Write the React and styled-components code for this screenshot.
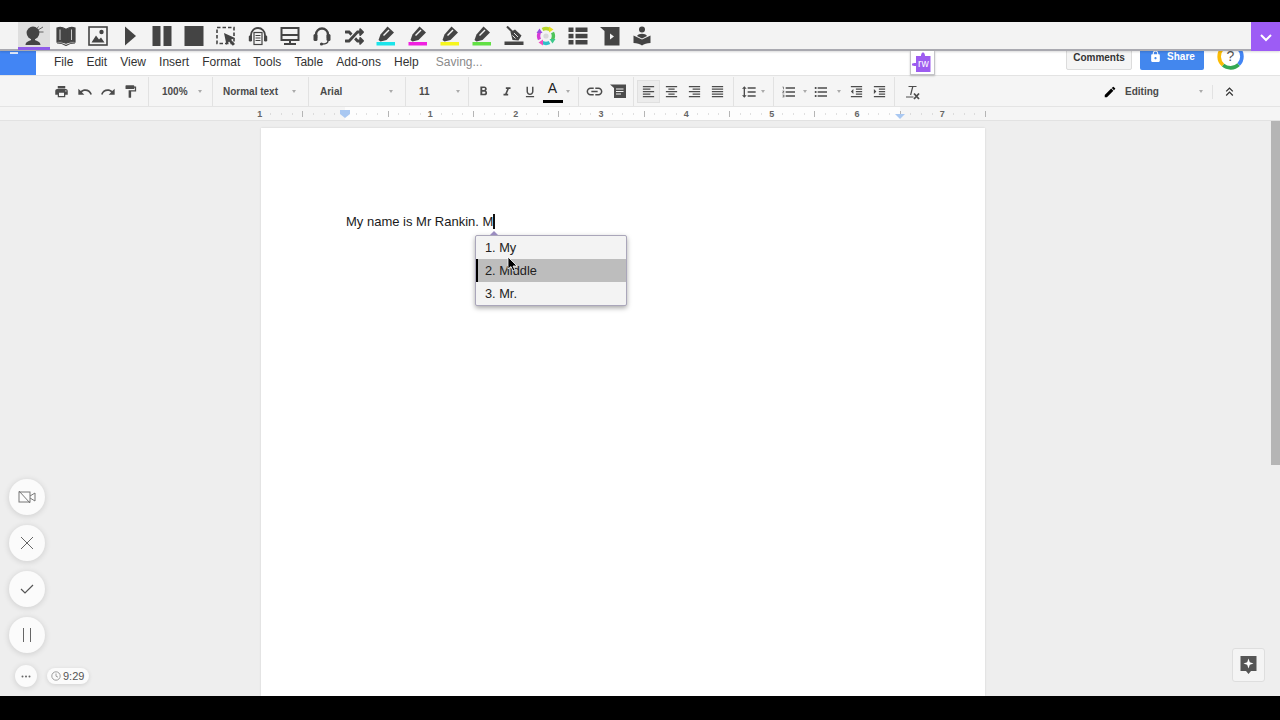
import React from 'react';
import styled, { createGlobalStyle } from 'styled-components';
import { FaRandom } from 'react-icons/fa';
import {
  MdPrint,
  MdUndo,
  MdRedo,
  MdFormatPaint,
  MdFormatBold,
  MdFormatItalic,
  MdFormatUnderlined,
  MdLink,
  MdFormatAlignLeft,
  MdFormatAlignCenter,
  MdFormatAlignRight,
  MdFormatAlignJustify,
  MdFormatLineSpacing,
  MdFormatListNumbered,
  MdFormatListBulleted,
  MdFormatIndentDecrease,
  MdFormatIndentIncrease,
  MdEdit,
  MdLock,
  MdKeyboardDoubleArrowUp,
} from 'react-icons/md';

const GlobalStyle = createGlobalStyle`
  html, body {
    margin: 0;
    padding: 0;
    background: #000;
  }
  body {
    font-family: "Liberation Sans", Arial, sans-serif;
  }
`;

const Frame = styled.div`
  width: 1280px;
  height: 720px;
  display: flex;
  flex-direction: column;
  overflow: hidden;
  background: #000;
`;

const BlackBar = styled.div`
  flex: none;
  height: ${(p) => p.$height}px;
  background: #000;
`;

const Main = styled.main`
  position: relative;
  flex: 1;
  min-height: 0;
  display: flex;
  flex-direction: column;
  background: #eee;
`;

/* read&write bar, sits over the docs header */
const RwBar = styled.div`
  position: absolute;
  top: 0;
  left: 0;
  right: 0;
  z-index: 5;
  height: 27px;
  padding: 0 0 0 18px;
  display: flex;
  background: #f3f3f3;
  border-bottom: 2px solid #a9a9b0;
  box-shadow: 0 1px 2px rgba(0, 0, 0, 0.15);
`;

const RwItem = styled.div`
  width: 32px;
  height: 28px;
  flex: none;
  display: flex;
  align-items: center;
  justify-content: center;
  color: #444;
  background: ${(p) => (p.$active ? '#dedede' : 'transparent')};
  box-shadow: ${(p) => (p.$active ? 'inset 0 -3px 0 #8f5ce8' : 'none')};
`;

const RwCollapse = styled.div`
  margin-left: auto;
  width: 29px;
  height: 29px;
  display: flex;
  align-items: center;
  justify-content: center;
  background: #9d5cf5;
  color: #fff;
`;

const PuzzleTab = styled.div`
  position: absolute;
  top: 29px;
  left: 910px;
  width: 25px;
  height: 24px;
  box-sizing: border-box;
  background: #fff;
  border: 1px solid #c4c4c8;
  border-top: none;
  box-shadow: 0 1px 2px rgba(0, 0, 0, 0.2);
`;

const Header = styled.header`
  flex: none;
  height: 53px;
  display: flex;
  align-items: flex-end;
  background: #fff;
  border-bottom: 1px solid #e3e3e3;
`;

const Logo = styled.div`
  width: 36px;
  height: 100%;
  box-sizing: border-box;
  padding: 30px 0 0 10px;
  background: #4285f4;

  &::before {
    content: '';
    display: block;
    width: 8px;
    height: 2px;
    background: #dfe9fb;
  }
`;

const Menu = styled.nav`
  display: flex;
  gap: 13.1px;
  padding: 0 0 6px 18px;
  font-size: 12px;
  line-height: 14px;
  color: #333;
`;

const Saving = styled.span`
  margin-left: 4px;
  color: #8a8a8a;
`;

const HeaderRight = styled.div`
  margin-left: auto;
  padding: 0 36px 5px 0;
  display: flex;
  align-items: flex-end;
`;

const CommentsButton = styled.div`
  width: 66px;
  height: 27px;
  box-sizing: border-box;
  padding-top: 7px;
  text-align: center;
  font-size: 10px;
  font-weight: bold;
  line-height: 14px;
  color: #333;
  background: #f5f5f5;
  border: 1px solid #dcdcdc;
  border-radius: 2px;
`;

const ShareButton = styled.div`
  width: 64px;
  height: 27px;
  margin: 0 13px 0 8px;
  box-sizing: border-box;
  padding-top: 7px;
  display: flex;
  justify-content: center;
  gap: 5px;
  font-size: 10px;
  font-weight: bold;
  line-height: 14px;
  color: #fff;
  background: #4387ee;
  border-radius: 2px;
`;

const Toolbar = styled.div`
  flex: none;
  height: 29px;
  display: flex;
  padding: 1px 0 0 50px;
  background: #f5f5f5;
  border-bottom: 1px solid #e4e4e4;
  color: #555;
`;

const Group = styled.div`
  flex: none;
  width: ${(p) => (p.$width ? `${p.$width}px` : 'auto')};
  box-sizing: border-box;
  padding-left: ${(p) => p.$pad || 0}px;
  display: flex;
  align-items: center;
  border-right: 1px solid #e2e2e2;
`;

const LastGroup = styled(Group)`
  flex: 1;
  border-right: none;
`;

const IconBtn = styled.div`
  flex: none;
  width: 23px;
  height: 23px;
  display: flex;
  align-items: center;
  justify-content: center;
  box-sizing: border-box;
  background: ${(p) => (p.$active ? '#ececec' : 'transparent')};
  border: 1px solid ${(p) => (p.$active ? '#e0e0e0' : 'transparent')};
  color: #4c4c4c;
`;

const ColorA = styled.div`
  width: 20px;
  height: 23px;
  box-sizing: border-box;
  border-bottom: 3px solid #000;
  font-size: 14px;
  line-height: 17px;
  text-align: center;
  color: #222;
`;

const Select = styled.div`
  flex: 1;
  height: 100%;
  padding: 0 ${(p) => p.$right || 11}px 0 ${(p) => p.$left || 12}px;
  display: flex;
  align-items: center;
  justify-content: space-between;
  font-size: 10px;
  font-weight: bold;
  color: #4a4a4a;
`;

const Caret = styled.span`
  flex: none;
  display: block;
  width: 0;
  height: 0;
  margin: ${(p) => p.$margin || '0'};
  border-left: 2.5px solid transparent;
  border-right: 2.5px solid transparent;
  border-top: 3px solid #aaa;
`;

const ModeGroup = styled(Group)`
  width: 110px;
  margin-left: auto;
  padding: 0 9px 0 0;
  justify-content: space-between;
  font-size: 10px;
  font-weight: bold;
  color: #4a4a4a;
`;

const ModeLabel = styled.div`
  display: flex;
  align-items: center;
  gap: 8px;
  color: #000;

  span {
    color: #4a4a4a;
  }
`;

const CollapseCell = styled.div`
  flex: none;
  width: 32px;
  margin-right: 35px;
  display: flex;
  align-items: center;
  justify-content: center;
  color: #333;
`;

const RulerSvg = styled.svg`
  flex: none;
  display: block;
`;

const Canvas = styled.div`
  flex: 1;
  min-height: 0;
  display: flex;
  overflow: hidden;
  background: #eee;
`;

const Page = styled.div`
  position: relative;
  flex: none;
  width: 724px;
  margin: 7px 0 0 261px;
  box-sizing: border-box;
  padding: 85px 85px 0;
  background: #fff;
  box-shadow: 0 0 2px rgba(0, 0, 0, 0.12);
  font-size: 13px;
  line-height: 18px;
  color: #1a1a1a;
`;

const TextCaret = styled.span`
  display: inline-block;
  width: 2px;
  height: 15px;
  vertical-align: -3px;
  background: #111;
`;

const Popup = styled.div`
  position: absolute;
  top: 107px;
  left: 214px;
  width: 152px;
  box-sizing: border-box;
  background: #f3f3f3;
  border: 1px solid #aaa6ba;
  border-radius: 2px;
  box-shadow: 0 2px 5px rgba(0, 0, 0, 0.35);

  &::before {
    content: '';
    position: absolute;
    top: -5px;
    left: 14px;
    border-left: 4px solid transparent;
    border-right: 4px solid transparent;
    border-bottom: 4px solid #9a8cc0;
  }
`;

const PopupRow = styled.div`
  height: 23px;
  box-sizing: border-box;
  padding-left: ${(p) => (p.$selected ? 7 : 9)}px;
  display: flex;
  align-items: center;
  gap: 3.5px;
  font-size: 12.8px;
  color: #222;
  background: ${(p) => (p.$selected ? '#bdbdbd' : 'transparent')};
  border-left: ${(p) => (p.$selected ? '2px solid #000' : 'none')};
`;

const Pointer = styled.svg`
  position: absolute;
  top: 128px;
  left: 246px;
  z-index: 2;
`;

const ScrollColumn = styled.div`
  flex: none;
  width: 9px;
  margin-left: auto;
`;

const ScrollThumb = styled.div`
  height: 344px;
  background: #b5b5b5;
`;

const Floating = styled.div`
  position: absolute;
  left: 9px;
  bottom: 9px;
  z-index: 3;
  display: flex;
  flex-direction: column;
  align-items: flex-start;
  gap: 10px;
`;

const RoundButton = styled.div`
  width: 36px;
  height: 36px;
  border-radius: 50%;
  display: flex;
  align-items: center;
  justify-content: center;
  background: #fbfbfb;
  color: #666;
  box-shadow: 0 1px 6px rgba(0, 0, 0, 0.14);
`;

const TimerRow = styled.div`
  margin: 2px 0 0 6px;
  display: flex;
  align-items: center;
  gap: 10px;
`;

const SmallRound = styled(RoundButton)`
  width: 22px;
  height: 22px;
`;

const TimerPill = styled.div`
  width: 42px;
  height: 16px;
  box-sizing: border-box;
  padding-left: 4px;
  display: flex;
  align-items: center;
  gap: 2px;
  font-size: 11px;
  color: #555;
  background: #fbfbfb;
  border-radius: 8px;
  box-shadow: 0 1px 4px rgba(0, 0, 0, 0.12);
`;

const ExploreButton = styled.div`
  position: absolute;
  right: 15px;
  bottom: 14px;
  width: 33px;
  height: 34px;
  box-sizing: border-box;
  display: flex;
  align-items: center;
  justify-content: center;
  background: #f4f4f4;
  border: 1px solid #dedede;
  border-radius: 3px;
`;

const DARK = '#444';

function RwIcon({ children }) {
  return (
    <svg width="20" height="20" viewBox="0 0 20 20" fill={DARK}>
      {children}
    </svg>
  );
}

function Highlighter({ color }) {
  return (
    <RwIcon>
      <path d="M2.5 14 L4.5 8.5 L11.5 0.5 L18 6.5 L10.5 14 L4.5 15.5 Z" />
      <path d="M7.5 9.5 L13 4" stroke="#f3f3f3" strokeWidth="1.4" fill="none" />
      <rect x="0.5" y="16" width="18.5" height="3.5" fill={color} />
    </RwIcon>
  );
}

const rwIcons = [
  <RwIcon key="person">
    <circle cx="9" cy="7" r="6.4" />
    <path d="M1.5 19 C1.5 16 5 15 7 14 V11 H11 V14 C13 15 16.5 16 16.5 19 Z" />
    <path d="M14 4 L19 1 M15 6 L19.5 6 M13 2.5 L14.5 0.5" stroke={DARK} strokeWidth="0.8" />
  </RwIcon>,
  <RwIcon key="book">
    <path d="M1 2 C4 1 7 1.5 9.4 3 V17 C7 16 4 15.5 1 16 Z" stroke={DARK} strokeWidth="1.2" />
    <path d="M19 2 C16 1 13 1.5 10.6 3 V17 C13 16 16 15.5 19 16 Z" stroke={DARK} strokeWidth="1.2" />
    <path d="M4 3.5 V14 M15.5 3.5 V14" stroke="#ccc" strokeWidth="1" />
    <path d="M1 17 C4 17 7 17.5 10 19.5 C13 17.5 16 17 19 17" stroke={DARK} strokeWidth="1.2" fill="none" />
  </RwIcon>,
  <RwIcon key="picture">
    <rect x="1" y="1" width="18" height="18" fill="#f3f3f3" stroke={DARK} strokeWidth="1.6" />
    <circle cx="13.5" cy="6" r="2.2" />
    <path d="M3.5 16.5 L8 9.5 L11 13.5 L13 11.5 L16.5 16.5 Z" />
  </RwIcon>,
  <RwIcon key="play">
    <path d="M5 0.5 L16 10 L5 19.5 Z" />
  </RwIcon>,
  <RwIcon key="pause">
    <rect x="0.5" y="0" width="8" height="20" />
    <rect x="11.5" y="0" width="8" height="20" />
  </RwIcon>,
  <RwIcon key="stop">
    <rect x="0.5" y="0" width="19" height="20" />
  </RwIcon>,
  <RwIcon key="select">
    <rect x="1" y="1.5" width="17" height="16" fill="none" stroke={DARK} strokeWidth="1.6" strokeDasharray="3.5 2" />
    <path d="M8 7 L19 12 L15 13.8 L19 18 L16.8 19.8 L13 15.5 L10.5 19 Z" />
  </RwIcon>,
  <RwIcon key="speak">
    <path d="M3 11 V9 A7 7 0 0 1 17 9 V11" fill="none" stroke={DARK} strokeWidth="1.8" />
    <rect x="0.8" y="9.5" width="3.2" height="6" rx="1.2" />
    <rect x="16" y="9.5" width="3.2" height="6" rx="1.2" />
    <rect x="6" y="6.5" width="8" height="12" fill="#f3f3f3" stroke={DARK} strokeWidth="1.2" />
    <path d="M7.5 9.5 H12.5 M7.5 12 H12.5 M7.5 14.5 H12.5" stroke={DARK} strokeWidth="1" />
  </RwIcon>,
  <RwIcon key="monitor">
    <rect x="1.5" y="2" width="17" height="12" fill="none" stroke={DARK} strokeWidth="2" />
    <rect x="2" y="8" width="16" height="2" />
    <rect x="9" y="14" width="2" height="3" />
    <rect x="4" y="17" width="12" height="2" />
  </RwIcon>,
  <RwIcon key="headset">
    <path d="M4 12 V8.5 A6 6 0 0 1 16 8.5 V12" fill="none" stroke={DARK} strokeWidth="2.4" />
    <rect x="1.5" y="8" width="4" height="7" rx="1.5" />
    <rect x="14.5" y="8" width="4" height="7" rx="1.5" />
    <path d="M16 15 C16 17.5 13 18 10 18" fill="none" stroke={DARK} strokeWidth="1.4" />
    <circle cx="9.5" cy="18" r="1.6" />
  </RwIcon>,
  <FaRandom key="shuffle" size={19} />,
  <Highlighter key="cyan" color="#1be4ea" />,
  <Highlighter key="magenta" color="#f020e0" />,
  <Highlighter key="yellow" color="#f6f61e" />,
  <Highlighter key="green" color="#62e044" />,
  <RwIcon key="eraser">
    <path d="M3 0.5 L9 6.5" stroke={DARK} strokeWidth="2" />
    <path d="M6.5 6 L11 3.5 L17.5 9.5 L14.5 14.5 L8.5 14 Z" />
    <path d="M10 7 L14 11 M8.5 9.5 L11.5 12.5" stroke="#f3f3f3" strokeWidth="0.9" />
    <rect x="0.5" y="15.5" width="19" height="3.5" />
  </RwIcon>,
  <RwIcon key="wheel">
    <g fill="none" strokeWidth="3.4">
      <path d="M6.5 3.5 A7.4 7.4 0 0 1 13.5 3.5" stroke="#b7d82a" />
      <path d="M16.5 6.5 A7.4 7.4 0 0 1 16.5 13.5" stroke="#4ec45a" />
      <path d="M13.5 16.5 A7.4 7.4 0 0 1 6.5 16.5" stroke="#2fc0c8" />
      <path d="M3.5 13.5 A7.4 7.4 0 0 1 3.5 6.5" stroke="#d63ad6" />
    </g>
    <path d="M0.5 7 L6.5 7 L3.5 2.5 Z" fill="#9a4de0" />
    <path d="M13 0.5 L13 6.5 L17.5 3.5 Z" fill="#e8e020" />
    <path d="M19.5 13 L13.5 13 L16.5 17.5 Z" fill="#3cc88a" />
    <path d="M7 19.5 L7 13.5 L2.5 16.5 Z" fill="#f04fc0" />
    <circle cx="10" cy="10" r="2.6" fill="#d8d8d8" />
  </RwIcon>,
  <RwIcon key="list">
    <rect x="0.5" y="1.5" width="5" height="4.5" />
    <rect x="7.5" y="1.5" width="12" height="4.5" />
    <rect x="0.5" y="7.8" width="5" height="4.5" />
    <rect x="7.5" y="7.8" width="12" height="4.5" />
    <rect x="0.5" y="14" width="5" height="4.5" />
    <rect x="7.5" y="14" width="12" height="4.5" />
  </RwIcon>,
  <RwIcon key="bookplay">
    <path d="M0 1 H19.5 V19.5 H4.5 V5 Z" />
    <path d="M10 7.5 L14 10.5 L10 13.5 Z" fill="#f3f3f3" />
  </RwIcon>,
  <RwIcon key="reader">
    <circle cx="10" cy="3.5" r="3" />
    <path d="M5 10 C6.5 7 13.5 7 15 10 L10 12.5 Z" />
    <path d="M1.5 9.5 L10 13.5 L18.5 9.5 V17 C15 17 12 18 10 19.5 C8 18 5 17 1.5 17 Z" />
  </RwIcon>,
];

function PuzzleIcon() {
  return (
    <svg width="23" height="22" viewBox="0 0 23 22">
      <path
        d="M5 5 H10 C10 4 10 3.5 10.5 3 C10.5 1 13.5 1 13.5 3 C14 3.5 14 4 14 5 H19.5 V21 H5 V15 C3 15 2.5 15 2 14.5 H1 V12.5 H2 C2.5 12 3 12 5 12 Z"
        fill="#9d5cf0"
      />
      <text x="12.4" y="16" textAnchor="middle" fontSize="10" fill="#fff" fontFamily="Liberation Sans, sans-serif">
        rw
      </text>
    </svg>
  );
}

function CommentIcon() {
  return (
    <svg width="16" height="15" viewBox="0 0 16 15">
      <path d="M0 0.5 H16 V14 H4 V4 Z" fill="#4c4c4c" />
      <path d="M6 5 H13.5 M6 7.5 H13.5 M6 10 H11" stroke="#f5f5f5" strokeWidth="1" />
    </svg>
  );
}

function ClearIcon() {
  return (
    <svg width="16" height="16" viewBox="0 0 16 16" fill="none" stroke="#4c4c4c">
      <path d="M4.5 2.5 H12.5 M8.8 2.5 L6.6 11" strokeWidth="1.2" />
      <path d="M2 13 H9.5" strokeWidth="1" />
      <path d="M10 9.5 L15 15 M15 9.5 L10 15" strokeWidth="1.8" />
    </svg>
  );
}

function HelpRing() {
  const seg = { fill: 'none', strokeWidth: 3.6 };
  return (
    <svg width="27" height="27" viewBox="0 0 27 27">
      <path d="M5.4 5.4 A11.5 11.5 0 0 1 21.6 5.4" stroke="#ea4335" {...seg} />
      <path d="M21.6 5.4 A11.5 11.5 0 0 1 21.6 21.6" stroke="#4285f4" {...seg} />
      <path d="M21.6 21.6 A11.5 11.5 0 0 1 6 22" stroke="#34a853" {...seg} />
      <path d="M6 22 A11.5 11.5 0 0 1 5.4 5.4" stroke="#fbbc05" {...seg} />
      <text x="13.5" y="18" textAnchor="middle" fontSize="14" fill="#555" fontFamily="Liberation Sans, sans-serif">
        ?
      </text>
    </svg>
  );
}

// ruler is drawn to scale, 85.33px to the inch with zero at the left margin
function Ruler() {
  const inch = 85.33;
  const zero = 345;
  const ticks = [];
  for (let i = -8; i <= 64 - 4; i++) {
    const x = zero + (i * inch) / 8;
    if (i % 8 === 0) continue;
    if (i % 4 === 0) {
      ticks.push(<rect key={i} x={Math.round(x)} y="4" width="1" height="6" fill="#b5b5b5" />);
    } else {
      ticks.push(<rect key={i} x={Math.round(x)} y="6.5" width="1" height="1" fill="#c4c4c4" />);
    }
  }
  const numbers = [-1, 1, 2, 3, 4, 5, 6, 7];
  return (
    <RulerSvg width="1280" height="14" viewBox="0 0 1280 14">
      <rect width="1280" height="14" fill="#f5f5f5" />
      <rect x="345" width="555" height="13" fill="#fdfdfd" />
      <rect y="13" width="1280" height="1" fill="#e2e2e2" />
      {ticks}
      {numbers.map((n) => (
        <text
          key={n}
          x={zero + n * inch}
          y="10"
          textAnchor="middle"
          fontSize="9"
          fontWeight="bold"
          fill="#666"
          fontFamily="Liberation Sans, sans-serif"
        >
          {Math.abs(n)}
        </text>
      ))}
      <path d="M340 3 H350 V7 L345 11 L340 7 Z" fill="#a9c8f2" />
      <path d="M895 7 H905 L900 12 Z" fill="#a9c8f2" />
    </RulerSvg>
  );
}

export default function App() {
  return (
    <>
      <GlobalStyle />
      <Frame>
        <BlackBar $height={22} />
        <Main>
          <RwBar>
            {rwIcons.map((icon, i) => (
              <RwItem key={icon.key} $active={i === 0}>
                {icon}
              </RwItem>
            ))}
            <RwCollapse>
              <svg width="14" height="14" viewBox="0 0 14 14">
                <path d="M2 5 L7 10 L12 5" fill="none" stroke="#fff" strokeWidth="2" />
              </svg>
            </RwCollapse>
            <PuzzleTab>
              <PuzzleIcon />
            </PuzzleTab>
          </RwBar>

          <Header>
            <Logo />
            <Menu>
              <span>File</span>
              <span>Edit</span>
              <span>View</span>
              <span>Insert</span>
              <span>Format</span>
              <span>Tools</span>
              <span>Table</span>
              <span>Add-ons</span>
              <span>Help</span>
              <Saving>Saving...</Saving>
            </Menu>
            <HeaderRight>
              <CommentsButton>Comments</CommentsButton>
              <ShareButton>
                <MdLock size={13} />
                Share
              </ShareButton>
              <HelpRing />
            </HeaderRight>
          </Header>

          <Toolbar>
            <Group $width={99}>
              <IconBtn><MdPrint size={15} /></IconBtn>
              <IconBtn><MdUndo size={16} /></IconBtn>
              <IconBtn><MdRedo size={16} /></IconBtn>
              <IconBtn><MdFormatPaint size={15} /></IconBtn>
            </Group>
            <Group $width={64}>
              <Select $left={13} $right={10}>100%<Caret /></Select>
            </Group>
            <Group $width={96}>
              <Select $left={10} $right={12}>Normal text<Caret /></Select>
            </Group>
            <Group $width={97}>
              <Select $left={11} $right={12}>Arial<Caret /></Select>
            </Group>
            <Group $width={63}>
              <Select $left={13} $right={8}>11<Caret /></Select>
            </Group>
            <Group $width={110} $pad={3}>
              <IconBtn><MdFormatBold size={15} /></IconBtn>
              <IconBtn><MdFormatItalic size={14} /></IconBtn>
              <IconBtn><MdFormatUnderlined size={14} /></IconBtn>
              <IconBtn><ColorA>A</ColorA></IconBtn>
              <Caret $margin="0 0 0 2px" />
            </Group>
            <Group $width={55} $pad={4}>
              <IconBtn><MdLink size={19} /></IconBtn>
              <IconBtn><CommentIcon /></IconBtn>
            </Group>
            <Group $width={100} $pad={3}>
              <IconBtn $active><MdFormatAlignLeft size={15} /></IconBtn>
              <IconBtn><MdFormatAlignCenter size={15} /></IconBtn>
              <IconBtn><MdFormatAlignRight size={15} /></IconBtn>
              <IconBtn><MdFormatAlignJustify size={15} /></IconBtn>
            </Group>
            <Group $width={40} $pad={3}>
              <IconBtn><MdFormatLineSpacing size={16} /></IconBtn>
              <Caret $margin="0 0 0 1px" />
            </Group>
            <Group $width={121} $pad={3}>
              <IconBtn><MdFormatListNumbered size={16} /></IconBtn>
              <Caret $margin="0 2.5px 0 2.5px" />
              <IconBtn><MdFormatListBulleted size={16} /></IconBtn>
              <Caret $margin="0 4px 0 5px" />
              <IconBtn><MdFormatIndentDecrease size={15} /></IconBtn>
              <IconBtn><MdFormatIndentIncrease size={15} /></IconBtn>
            </Group>
            <LastGroup $pad={5}>
              <IconBtn><ClearIcon /></IconBtn>
              <ModeGroup>
                <ModeLabel>
                  <MdEdit size={14} />
                  <span>Editing</span>
                </ModeLabel>
                <Caret />
              </ModeGroup>
            </LastGroup>
            <CollapseCell><MdKeyboardDoubleArrowUp size={15} /></CollapseCell>
          </Toolbar>

          <Ruler />

          <Canvas>
            <Page>
              My name is Mr Rankin. M<TextCaret />
              <Popup>
                <PopupRow><span>1.</span><span>My</span></PopupRow>
                <PopupRow $selected><span>2.</span><span>Middle</span></PopupRow>
                <PopupRow><span>3.</span><span>Mr.</span></PopupRow>
              </Popup>
              <Pointer width="11" height="16" viewBox="0 0 11 16">
                <path d="M1 1 V13 L4 10.5 L6 15 L8 14 L6 10 H10 Z" fill="#000" stroke="#fff" strokeWidth="0.8" />
              </Pointer>
            </Page>
            <ScrollColumn><ScrollThumb /></ScrollColumn>
          </Canvas>

          <Floating>
            <RoundButton>
              <svg width="18" height="14" viewBox="0 0 18 14" fill="none" stroke="#777" strokeWidth="1">
                <rect x="1" y="2" width="11" height="10" />
                <path d="M12 6 L17 3 V11 L12 8" />
                <path d="M1 1 L12 13" />
              </svg>
            </RoundButton>
            <RoundButton>
              <svg width="14" height="14" viewBox="0 0 14 14" fill="none" stroke="#666" strokeWidth="1">
                <path d="M1 1 L13 13 M13 1 L1 13" />
              </svg>
            </RoundButton>
            <RoundButton>
              <svg width="14" height="12" viewBox="0 0 14 12" fill="none" stroke="#555" strokeWidth="1.2">
                <path d="M1 6 L5 10 L13 2" />
              </svg>
            </RoundButton>
            <RoundButton>
              <svg width="10" height="14" viewBox="0 0 10 14" fill="none" stroke="#666" strokeWidth="1">
                <path d="M1.5 0 V14 M8.5 0 V14" />
              </svg>
            </RoundButton>
            <TimerRow>
              <SmallRound>
                <svg width="10" height="3" viewBox="0 0 10 3" fill="#666">
                  <circle cx="1.5" cy="1.5" r="1" />
                  <circle cx="5" cy="1.5" r="1" />
                  <circle cx="8.5" cy="1.5" r="1" />
                </svg>
              </SmallRound>
              <TimerPill>
                <svg width="10" height="10" viewBox="0 0 10 10" fill="none" stroke="#888" strokeWidth="0.8">
                  <circle cx="5" cy="5" r="4.2" />
                  <path d="M5 2.5 V5.2 L7 6.2" />
                </svg>
                9:29
              </TimerPill>
            </TimerRow>
          </Floating>

          <ExploreButton>
            <svg width="17" height="20" viewBox="0 0 17 20">
              <path d="M0.5 1 H16.5 V16 H11 L8.5 19 L6 16 H0.5 Z" fill="#555" />
              <path d="M8.5 3.5 L9.8 7.2 L13.5 8.5 L9.8 9.8 L8.5 13.5 L7.2 9.8 L3.5 8.5 L7.2 7.2 Z" fill="#fff" />
            </svg>
          </ExploreButton>
        </Main>
        <BlackBar $height={24} />
      </Frame>
    </>
  );
}
